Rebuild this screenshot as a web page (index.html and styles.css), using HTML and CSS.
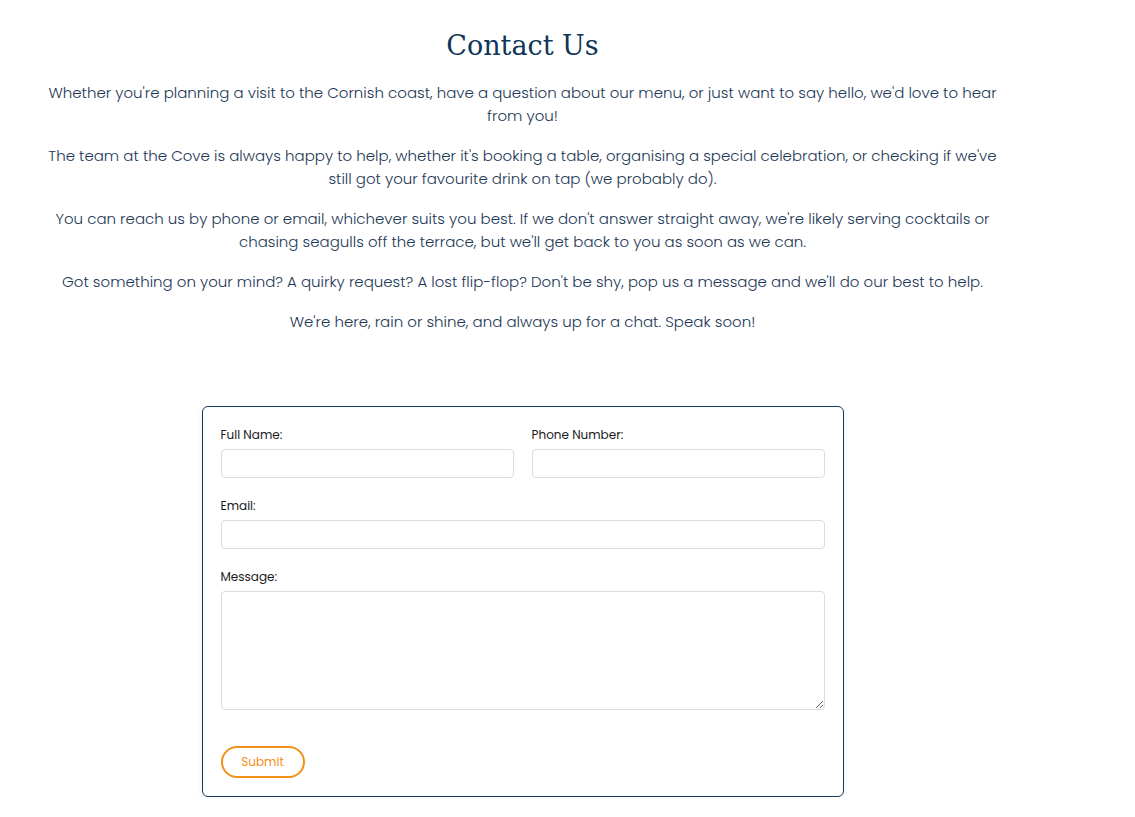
FILE: index.html
```html
<!DOCTYPE html>
<html lang="en">
<head>
<meta charset="utf-8">
<title>Contact Us</title>
<link rel="stylesheet" href="styles.css">
</head>
<body>
<main class="page">
  <section class="intro">
    <h1 class="title">Contact Us</h1>
    <p>Whether you're planning a visit to the Cornish coast, have a question about our menu, or just want to say hello, we'd love to hear from you!</p>
    <p>The team at the Cove is always happy to help, whether it's booking a table, organising a special celebration, or checking if we've still got your favourite drink on tap (we probably do).</p>
    <p>You can reach us by phone or email, whichever suits you best. If we don't answer straight away, we're likely serving cocktails or chasing seagulls off the terrace, but we'll get back to you as soon as we can.</p>
    <p>Got something on your mind? A quirky request? A lost flip-flop? Don't be shy, pop us a message and we'll do our best to help.</p>
    <p>We're here, rain or shine, and always up for a chat. Speak soon!</p>
  </section>
  <form class="card">
    <div class="row">
      <div class="field">
        <label for="name">Full Name:</label>
        <input id="name" type="text">
      </div>
      <div class="field">
        <label for="phone">Phone Number:</label>
        <input id="phone" type="tel">
      </div>
    </div>
    <div class="field">
      <label for="email">Email:</label>
      <input id="email" type="email">
    </div>
    <div class="field">
      <label for="msg">Message:</label>
      <textarea id="msg"></textarea>
    </div>
    <div class="actions">
      <button type="button" class="submit">Submit</button>
    </div>
  </form>
</main>
</body>
</html>
```

FILE: styles.css
```css
* { box-sizing: border-box; }
body {
  margin: 0;
  background: #fff;
  color: #1d3856;
  font-family: "Poppins", "Noto Sans", sans-serif;
}
.page {
  width: 1045px;
  padding-top: 28px;
}
.intro {
  text-align: center;
  padding: 0 40px;
}
.title {
  font-family: "DejaVu Serif", serif;
  font-weight: 400;
  font-size: 27px;
  line-height: 36px;
  color: #0f3557;
  margin: 0 0 17px;
}
.intro p {
  font-size: 15px;
  line-height: 23px;
  font-weight: 300;
  margin: 0 0 17px;
}
.card {
  width: 642px;
  margin: 73px auto 0;
  border: 1px solid #123b60;
  border-radius: 6px;
  box-shadow: 0 2px 6px rgba(20, 50, 90, 0.08);
  padding: 20px 18px 18px;
  display: flex;
  flex-direction: column;
  gap: 20px;
}
.row {
  display: grid;
  grid-template-columns: minmax(0, 1fr) minmax(0, 1fr);
  gap: 18px;
}
.field {
  display: flex;
  flex-direction: column;
  gap: 6px;
  min-width: 0;
}
.field label {
  font-size: 12px;
  line-height: 16px;
  color: #1b1b1b;
}
.field input {
  width: 100%;
  min-width: 0;
  height: 29px;
  border: 1px solid #dcdcdc;
  border-radius: 4px;
  font: inherit;
}
.field textarea {
  width: 100%;
  height: 119px;
  border: 1px solid #dcdcdc;
  border-radius: 4px;
  font: inherit;
  resize: vertical;
}
.actions {
  padding-top: 16px;
}
.submit {
  width: 84px;
  height: 32px;
  border: 2px solid #f39018;
  border-radius: 16px;
  background: #fff;
  color: #f39018;
  font-family: inherit;
  font-size: 12px;
}
```
